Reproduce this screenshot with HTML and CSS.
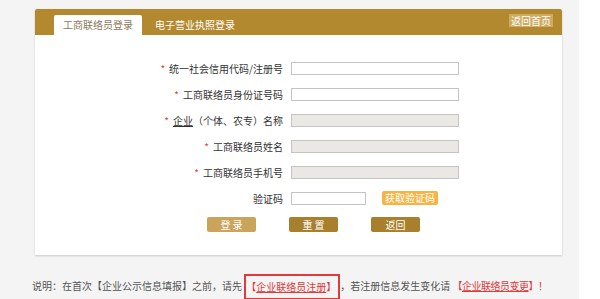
FILE: index.html
```html
<!DOCTYPE html>
<html lang="zh-CN">
<head>
    <meta charset="UTF-8">
    <title>工商联络员登录</title>
    <link rel="stylesheet" href="styles.css">
</head>
<body>
    <div class="page">
        <div class="login-box">
            <div class="login-head">
                <div class="tabs">
                    <span class="tab active">工商联络员登录</span>
                    <span class="tab">电子营业执照登录</span>
                </div>
                <a class="home-link" href="#">返回首页</a>
            </div>

            <form class="login-form">
                <div class="form-row">
                    <label><em>*</em>统一社会信用代码/注册号</label>
                    <input type="text">
                </div>
                <div class="form-row">
                    <label><em>*</em>工商联络员身份证号码</label>
                    <input type="text">
                </div>
                <div class="form-row">
                    <label><em>*</em><u>企业</u>（个体、农专）名称</label>
                    <input type="text" disabled>
                </div>
                <div class="form-row">
                    <label><em>*</em>工商联络员姓名</label>
                    <input type="text" disabled>
                </div>
                <div class="form-row">
                    <label><em>*</em>工商联络员手机号</label>
                    <input type="text" disabled>
                </div>
                <div class="form-row">
                    <label>验证码</label>
                    <div class="captcha">
                        <input type="text" class="captcha-input">
                        <button type="button" class="captcha-btn">获取验证码</button>
                    </div>
                </div>

                <div class="actions">
                    <button type="button" class="btn btn-light">登 录</button>
                    <button type="button" class="btn">重 置</button>
                    <button type="button" class="btn">返回</button>
                </div>
            </form>
        </div>

        <p class="notice">
            说明：在首次【企业公示信息填报】之前，请先 <span class="boxed"><a href="#" class="red">【<u>企业联络员注册</u>】</a></span>，若注册信息发生变化请 <a href="#" class="red tight">【<u>企业联络员变更</u>】</a><span class="red">！</span>
        </p>
    </div>
</body>
</html>
```

FILE: styles.css
```css
html {
    background: #fff;
}

body {
    margin: 0;
    font-family: "Noto Sans CJK SC", "Noto Sans", sans-serif;
    font-size: 10px;
    color: #444;
}

.page {
    width: 579px;
    height: 299px;
    background-color: #f4f4f4;
    padding-top: 9px;
    box-sizing: border-box;
}

.login-box {
    margin-left: 35px;
    width: 527px;
    height: 246px;
    background: #fff;
    box-shadow: 0 1px 2px rgba(0, 0, 0, 0.18);
}

.login-head {
    height: 26px;
    background-color: #b3892f;
    border-radius: 2px 2px 0 0;
    display: flex;
    justify-content: space-between;
    align-items: flex-start;
    padding: 0 9px 0 19px;
}

.tabs {
    display: flex;
    gap: 4px;
    margin-top: 6px;
}

.tab {
    height: 20px;
    line-height: 20px;
    padding: 0 9px;
    color: #fff;
}

.tab.active {
    background: #fff;
    color: #8c7a58;
    border-radius: 2px 2px 0 0;
}

.home-link {
    margin-top: 5px;
    height: 13px;
    line-height: 13px;
    padding: 0 2px;
    background-color: #cfab62;
    color: #fff;
    text-decoration: none;
}

.login-form {
    padding-top: 20px;
}

.form-row {
    display: grid;
    grid-template-columns: 248px 168px;
    column-gap: 8px;
    align-items: center;
    height: 26px;
}

.form-row label {
    text-align: right;
    color: #333;
}

.form-row em {
    font-style: normal;
    color: #d9453a;
    margin-right: 4px;
}

.form-row input {
    box-sizing: border-box;
    width: 168px;
    height: 13px;
    margin: 0;
    border: 1px solid #c4c4c4;
    background: #fff;
    padding: 0 3px;
    font-size: 10px;
}

.form-row input:disabled {
    background-color: #e9e8e4;
}

.captcha {
    display: flex;
    align-items: center;
    gap: 16px;
}

.form-row .captcha-input {
    width: 75px;
}

.captcha-btn {
    height: 14px;
    padding: 0 3px;
    border: none;
    border-radius: 2px;
    background-color: #f6b443;
    color: #fff;
    font-family: inherit;
    font-size: 10px;
    line-height: 14px;
}

.actions {
    display: flex;
    gap: 33px;
    padding-left: 172px;
    margin-top: 6px;
}

.btn {
    width: 49px;
    height: 15px;
    padding: 0;
    border: none;
    border-radius: 2px;
    background-color: #a87f2c;
    color: #fff;
    font-family: inherit;
    font-size: 10px;
    line-height: 15px;
}

.btn-light {
    background-color: #caa45a;
}

.notice {
    margin: 18px 0 0 32px;
    line-height: 26px;
    color: #555;
    white-space: nowrap;
}

.boxed {
    display: inline-block;
    border: 2px solid #e03a3a;
    height: 22px;
    line-height: 22px;
    padding: 0 2px 0 0;
    vertical-align: middle;
}

.red {
    color: #e03a3a;
    text-decoration: none;
}

.tight {
    letter-spacing: -0.5px;
}
```
